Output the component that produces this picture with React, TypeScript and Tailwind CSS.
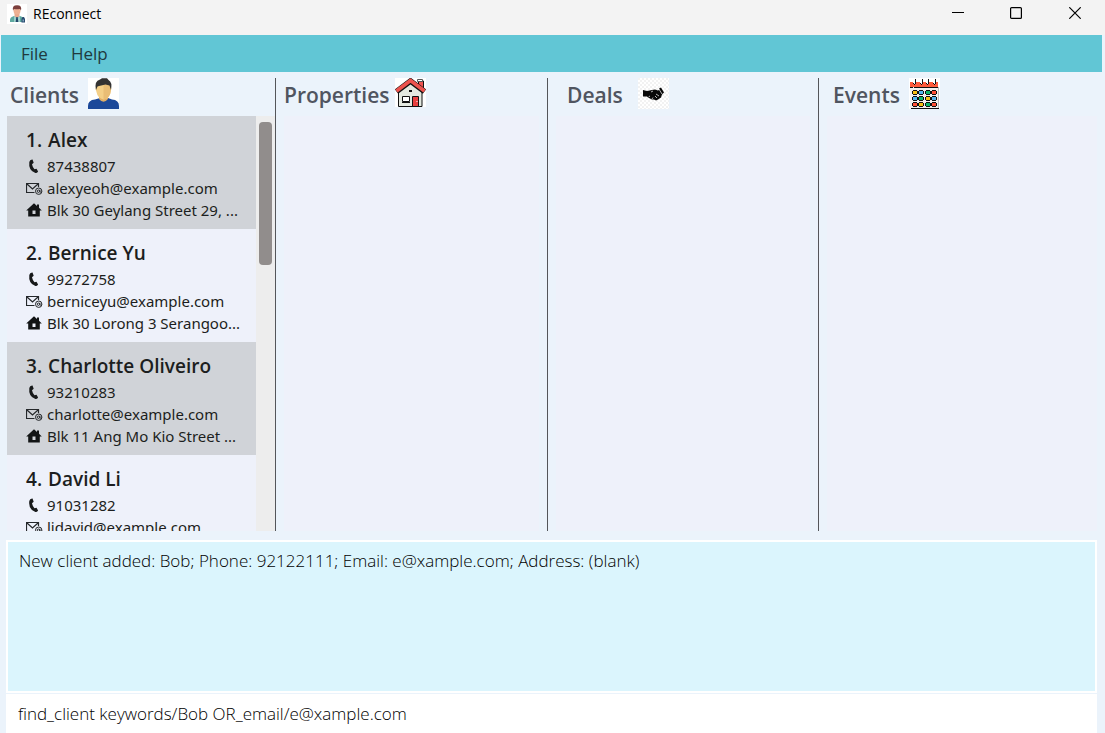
import type { ReactNode } from 'react';

const clients = [
  { name: 'Alex', phone: '87438807', email: 'alexyeoh@example.com', address: 'Blk 30 Geylang Street 29, ...' },
  { name: 'Bernice Yu', phone: '99272758', email: 'berniceyu@example.com', address: 'Blk 30 Lorong 3 Serangoo...' },
  { name: 'Charlotte Oliveiro', phone: '93210283', email: 'charlotte@example.com', address: 'Blk 11 Ang Mo Kio Street ...' },
  { name: 'David Li', phone: '91031282', email: 'lidavid@example.com' },
];

function AgentIcon() {
  return (
    <svg viewBox="0 0 20 20" className="size-5 bg-white" aria-hidden="true">
      <path d="M3 18v-2q0-3 4-4h6q4 1 4 4v2z" fill="#5fa9a0" />
      <path d="M7.5 9h5v3.500L10 15l-2.500-2.500z" fill="#e9a98c" />
      <path d="M7 12l3 2 3-2v6H7z" fill="#9fd0ca" />
      <path d="M9.300 13h1.400l.6 5H8.700z" fill="#23466b" />
      <ellipse cx="10" cy="6.500" rx="3.500" ry="4" fill="#eeb193" />
      <path d="M6 6.500Q4.800 1.300 10 1.200t4 5.300l-1-1.500q-3 .5-6 0z" fill="#7c3f3c" />
      <path d="M14.500 18.500V15l1-2h1.500l1 2v3.500z" fill="#2a4a70" />
      <path d="M15.500 15.500h1.500v2h-1.500z" fill="#7ba3bb" />
    </svg>
  );
}

function PersonIcon() {
  return (
    <svg viewBox="0 0 31 31" className="size-[31px] bg-white" aria-hidden="true">
      <path d="M0 31v-3q0-6 7-6.500l5-1.500h8l4 1.500q7 .5 7 6.500v3z" fill="#1b4899" />
      <path d="M11 16h9v5q-4.500 5.500-9 0z" fill="#e0ae67" />
      <path d="M8.500 7h13.500q1.500 1 1 5-1 9-7.500 9.500Q9.500 20 8.500 14l-1-3z" fill="#f4cf87" />
      <path d="M15.500 6H22q1.500 1 1 6-1 9-7.500 9.500z" fill="#e9bd75" />
      <path d="M8 12Q6 3 12 1.500L14 .3h5L20.500 2q4 2 2.500 10l-1.500-4.500-4-1L11 8l-1.500.5z" fill="#333232" />
    </svg>
  );
}

function HouseIcon() {
  return (
    <svg viewBox="0 0 31 29" className="h-[29px] w-[31px] bg-white" aria-hidden="true">
      <path d="M4 12L15.500 2 27 12v16.500H3.500V12z" fill="#e4e9e0" stroke="#111" />
      <path d="M23.500 7V3h5v8" fill="#ef5350" stroke="#111" />
      <path d="M22.500 1.500h5v2h-5z" fill="#fff" stroke="#555" />
      <path d="M1.500 13.500L15.500 3 29.500 13.500" fill="none" stroke="#111" strokeWidth="5.500" />
      <path d="M1.500 13L15.500 2.500 29.500 13" fill="none" stroke="#ed534e" strokeWidth="3.800" />
      <path d="M7.500 18.500h7v5h-7z" fill="#fff" stroke="#111" />
      <path d="M7 24.500h8" stroke="#111" />
      <path d="M17.500 18.500h6v10h-6z" fill="#e8403f" stroke="#111" />
      <path d="M14 12h3v2h-3z" fill="#111" />
      <path d="M21.500 23.500h1" stroke="#fff" />
    </svg>
  );
}

function DealIcon() {
  return (
    <svg viewBox="0 0 31 31" className="size-[31px]" aria-hidden="true">
      <defs>
        <pattern id="checks" width="4" height="4" patternUnits="userSpaceOnUse">
          <path d="M0 0h4v4H0z" fill="#fff" />
          <path d="M0 0h2v2H0zM2 2h2v2H2z" fill="#f2f2f2" />
        </pattern>
      </defs>
      <path d="M0 0h31v31H0z" fill="url(#checks)" />
      <path d="M5 12l4 1 5-1 3-.5 3 1 2-1-1-1 2-1 3 5-2 2-1 3-3 2-2 1-2-1-2 0-4-2-1-1H5z" fill="#090909" />
      <path d="M13 14l2-1M10.500 19l1.500-1M14 21l1-1.500M17 18l2 2M18 16l3 2M21.500 12l2.500 4" stroke="#fff" strokeWidth=".7" />
    </svg>
  );
}

const dotColours = [
  ['#f7bf12', '#53b5ee', '#0db568', '#ff5136'],
  ['#53b5ee', '#0db568', '#f7bf12', '#53b5ee'],
  ['#ff5136', '#f7bf12', '#0db568', '#ff5136'],
];

function CalendarIcon() {
  return (
    <svg viewBox="0 0 31 31" className="size-[31px] bg-white" shapeRendering="crispEdges" aria-hidden="true">
      <path d="M1 5h28v25H1z" fill="#f5f1ee" />
      <path d="M29 9h1v21h-1z" fill="#bdbdbd" />
      <path d="M1 4h28v5H1z" fill="#ff5a3b" />
      <path d="M1 9.500h3M5 9.500h24M2 30.500h28" stroke="#111" />
      {[5, 12, 18, 25].map((x) => (
        <g key={x}>
          <path d={`M${x - 1} 1h2v5h-2z`} fill="#fff" />
          <path d={`M${x + 1} 1h1v5h-1zM${x - 1} 5h1v1h-1zM${x} 6h1v1h-1z`} fill="#111" />
        </g>
      ))}
      {dotColours.map((row, r) =>
        row.map((fill, c) => (
          <g key={`${r}-${c}`} transform={`translate(${[3, 9, 16, 22][c]} ${12 + r * 6})`}>
            <path d="M1 0h4v1h1v3H5v1H1V4H0V1h1z" fill="#111" />
            <path d="M1 1h4v3H1z" fill={fill} />
          </g>
        )),
      )}
    </svg>
  );
}

function PhoneIcon() {
  return (
    <svg viewBox="0 0 16 16" className="size-4 shrink-0" aria-hidden="true">
      <path d="M3.300 4Q3.800 1.300 6.500 1.500l1.200 3.200-1.700 1.500q.5 3 2.500 5l2-.4 1.600 2.700q-1.200 1.800-2.700 1.500Q2.200 12.500 3.300 4z" fill="#17191a" />
    </svg>
  );
}

function MailIcon() {
  return (
    <svg viewBox="0 0 17 16" className="h-4 w-[17px] shrink-0" fill="none" stroke="#24272a" aria-hidden="true">
      <path d="M8.500 12.500h-8v-9h12V7M1 4l5.500 5L12 4" strokeWidth="1.200" />
      <circle cx="12.700" cy="11.200" r="3.200" />
      <circle cx="12.500" cy="11.200" r="1.200" />
      <path d="M13.900 9.800v1.800q.5 1 1.800.2" />
    </svg>
  );
}

function HomeIcon() {
  return (
    <svg viewBox="0 0 16 16" className="size-4 shrink-0" aria-hidden="true">
      <path d="M8 1.300l3 2.600V2.500h2v3.200L15.800 8.600h-2V14.500H2.200V8.600H.2zM6.500 8.500v3.500h3V8.500z" fill="#121415" fillRule="evenodd" />
    </svg>
  );
}

function Detail({ icon, children }: { icon: ReactNode; children: ReactNode }) {
  return (
    <div className="flex h-[22px] items-center gap-1">
      <span className="flex w-[17px] shrink-0">{icon}</span>
      <span className="font-['Noto_Sans',sans-serif] text-[15px] leading-[22px] whitespace-nowrap">{children}</span>
    </div>
  );
}

function Column({ title, icon, className, children }: { title: string; icon: ReactNode; className: string; children?: ReactNode }) {
  return (
    <section className="flex min-w-0 flex-col border-r border-[#54565a] last:border-r-0">
      <header className={`flex h-[38px] shrink-0 items-start ${className}`}>
        <h2 className="text-[21px] leading-[35px] font-semibold text-[#505560]">{title}</h2>
        {icon}
      </header>
      {children ?? <div className="mr-2 ml-2 flex-1 bg-[#eef1fa]" />}
    </section>
  );
}

export default function App() {
  return (
    <div className="flex h-screen flex-col overflow-hidden bg-[#ebf3fb] font-['Open_Sans','Noto_Sans',sans-serif] text-[#1c1e20]">
      <header className="flex h-[35px] shrink-0 items-start bg-[#f3f3f3] pt-1 pl-[7px] text-black">
        <AgentIcon />
        <h1 className="ml-[6px] text-[14px] leading-5">REconnect</h1>
        <div className="ml-auto flex">
          <button aria-label="Minimize" className="grid h-[18px] w-[58px] place-items-center">
            <svg viewBox="0 0 12 12" className="size-3" stroke="#000"><path d="M0 5.500h12" /></svg>
          </button>
          <button aria-label="Maximize" className="grid h-[18px] w-[58px] place-items-center">
            <svg viewBox="0 0 12 12" className="size-3" fill="none" stroke="#000"><rect x=".6" y=".6" width="10.800" height="10.800" rx="1" strokeWidth="1.200" /></svg>
          </button>
          <button aria-label="Close" className="grid h-[18px] w-[60px] place-items-center">
            <svg viewBox="0 0 12 12" className="size-3" stroke="#000"><path d="M.3.3l11.400 11.400M11.700.3L.3 11.700" strokeWidth="1.200" /></svg>
          </button>
        </div>
      </header>

      <nav className="mr-[3px] ml-px flex h-[37px] shrink-0 items-center gap-[23px] bg-[#61c6d5] pl-5 text-[17px] text-[#20393e]">
        <button>File</button>
        <button>Help</button>
      </nav>

      <main className="mt-[6px] grid min-h-0 flex-1 grid-cols-[276fr_272fr_271fr_286fr] grid-rows-[minmax(0,1fr)]">
        <Column title="Clients" icon={<PersonIcon />} className="gap-[9px] pl-[10px]">
          <div className="ml-[7px] flex min-h-0 flex-1">
            <ol className="min-w-0 flex-1 overflow-hidden">
              {clients.map((client, index) => (
                <li key={client.name} className="h-[113px] overflow-hidden bg-[#eef1fa] pt-[10px] pr-3 pl-[19px] odd:bg-[#d0d3d8]">
                  <h3 className="flex gap-[6px] text-[19px] leading-[29px] font-semibold">
                    <span>{index + 1}.</span>
                    <span>{client.name}</span>
                  </h3>
                  <Detail icon={<PhoneIcon />}>{client.phone}</Detail>
                  <Detail icon={<MailIcon />}>{client.email}</Detail>
                  {client.address && <Detail icon={<HomeIcon />}>{client.address}</Detail>}
                </li>
              ))}
            </ol>
            <div className="w-[19px] shrink-0 bg-[#ededed] px-[3px] pt-[6px]">
              <div className="h-[143px] rounded-[4px] bg-[#918d8c]" />
            </div>
          </div>
        </Column>
        <Column title="Properties" icon={<HouseIcon />} className="gap-[5px] pl-2" />
        <Column title="Deals" icon={<DealIcon />} className="gap-[15px] pl-[19px]" />
        <Column title="Events" icon={<CalendarIcon />} className="gap-[9px] pl-[14px]" />
      </main>

      <footer className="mt-[9px] mr-2 ml-[6px] shrink-0">
        <output className="block h-[153px] border-2 border-white bg-[#dbf5fd] px-[11px] pt-[7px] text-[17px] leading-6 font-light text-black">
          New client added: Bob; Phone: 92122111; Email: e@xample.com; Address: (blank)
        </output>
        <input
          type="text"
          aria-label="Command"
          defaultValue="find_client keywords/Bob OR_email/e@xample.com"
          className="mt-px block h-[39px] w-full bg-white px-3 text-[17px] leading-6 font-light text-black outline-none"
        />
      </footer>
    </div>
  );
}
